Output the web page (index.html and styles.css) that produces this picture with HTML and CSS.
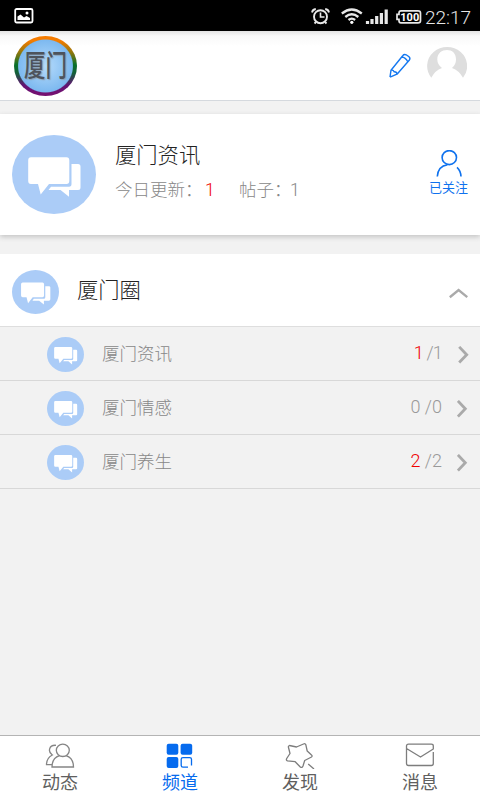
FILE: index.html
```
<!DOCTYPE html>
<html lang="zh-CN">
<head>
<meta charset="utf-8">
<title>厦门</title>
<link rel="stylesheet" href="styles.css">
</head>
<body>
<svg width="0" height="0" class="defs">
  <symbol id="chat" viewBox="0 0 84 79" preserveAspectRatio="none">
    <ellipse cx="42" cy="39.5" rx="42" ry="39.5" fill="#abccf7"/>
    <path fill="#fff" d="M19 22.3H54.5Q57.3 22.3 57.3 25.5V46Q57.3 49 54.5 49H37L28.7 59.5L26 49H19Q16.2 49 16.2 46V25.5Q16.2 22.3 19 22.3Z"/>
    <path fill="#fff" d="M59.5 29H66Q68.5 29 68.5 31.5V52.5Q68.5 55 66 55H57V61.8L48.5 55H36.5L39 51.8H57Q59.5 51.8 59.5 49Z"/>
  </symbol>
</svg>
<div class="status">
  <svg class="picture" width="20" height="16" viewBox="0 0 20 16"><rect x="1.2" y="1" width="17.3" height="13.5" rx="1.5" fill="none" stroke="#fff" stroke-width="1.8"/><path d="M3.5 12V8.5L6.5 6.5L10 9.5L12.5 8L16 10V12Z" fill="#fff"/><circle cx="13" cy="5" r="1.5" fill="#fff"/></svg>
  <svg class="signals" width="124" height="20" viewBox="309 6 124 20" fill="none" stroke="#e8e8e8">
    <circle cx="320.5" cy="16.7" r="6.5" stroke-width="1.9"/><path d="M320.5 12.5V17H324.5" stroke-width="1.6"/><path d="M312 12.5Q312.5 9.5 315.8 9M329 12.5Q328.5 9.5 325.2 9M316 22L314.5 23.5M325 22L326.5 23.5" stroke-width="1.8"/>
    <path d="M341.8 13.5Q351.8 5.5 361.8 13.5M345.3 17Q351.8 11.5 358.3 17M348.5 20Q351.8 17.2 355.1 20" stroke-width="2.3"/><circle cx="351.8" cy="22.3" r="1.6" fill="#fff" stroke="none"/>
    <path d="M367.5 21V24M372 19V24M376.7 16V24M381.4 13V24M386.2 9.5V24" stroke-width="3.2"/>
    <path d="M401 10.8H418Q420.5 10.8 420.5 13V20.7Q420.5 22.8 418 22.8H401Q399 22.8 399 20.7V19.3H397V14.3H399V13Q399 10.8 401 10.8Z" stroke-width="1.7"/>
    <text x="400.3" y="20.8" class="battery">100</text>
  </svg>
  <span class="clock">22:17</span>
</div>
<header class="top">
  <div class="logo"><span>厦门</span></div>
  <svg class="pencil" width="24" height="26" viewBox="0 0 24 26" fill="none" stroke="#1578f0" stroke-width="1.4" stroke-linejoin="round"><path d="M2 24.2L3 17.2L14.7 2.7Q16 1 18.2 1.8L21 3.8Q22.7 5.3 21.2 7.2L9 21.2L2 24.2M3 17.2Q5.5 16.7 6 18.7Q8.8 18.5 9 21.2M13.7 4Q17.5 4.2 19.8 8.7"/></svg>
  <svg class="avatar" width="40" height="35" viewBox="0 0 40 35"><path fill="#dedede" d="M4.3 31.7A20 19 0 1 1 36 31.7Q32 24.5 25 22Q29 18.5 29 13.5C29 7 25 4 20 4S10.3 7 10.3 13.5Q10.3 18.5 15 22Q8 24.5 4.3 31.7Z"/></svg>
</header>
<section class="board">
  <svg class="chat-lg"><use href="#chat"/></svg>
  <div class="info">
    <h1>厦门资讯</h1>
    <p><span class="update">今日更新：</span><b>1</b><span class="posts">帖子：</span><span>1</span></p>
  </div>
  <div class="follow">
    <svg width="28" height="28" viewBox="0 0 28 28" fill="none" stroke="#0f72ee" stroke-width="1.6"><ellipse cx="15.3" cy="7.6" rx="7.2" ry="7"/><path d="M3.3 26.5Q4 16 13.5 14.7M23 17.3Q26.7 20.5 27 26.5"/></svg>
    <span>已关注</span>
  </div>
</section>
<section class="group">
  <svg class="chat-md"><use href="#chat"/></svg>
  <h2>厦门圈</h2>
  <svg class="up" width="20" height="11" viewBox="0 0 20 11" fill="none" stroke="#aaa" stroke-width="2.4"><path d="M1.8 9.2L10.6 2L19.3 9.2"/></svg>
</section>
<ul class="rows">
  <li><svg class="chat-sm"><use href="#chat"/></svg><span class="name">厦门资讯</span><span class="count tight"><b>1</b> /1</span><svg class="next" width="12" height="18" viewBox="0 0 12 18"><path d="M2.2 .9L9.7 8.7L2.2 16.5"/></svg></li>
  <li><svg class="chat-sm"><use href="#chat"/></svg><span class="name">厦门情感</span><span class="count">0 /0</span><svg class="next" width="12" height="18" viewBox="0 0 12 18"><path d="M.9 .9L8.3 8.7L.9 16.5"/></svg></li>
  <li><svg class="chat-sm"><use href="#chat"/></svg><span class="name">厦门养生</span><span class="count"><b>2</b> /2</span><svg class="next" width="12" height="18" viewBox="0 0 12 18"><path d="M.9 .9L8.3 8.7L.9 16.5"/></svg></li>
</ul>
<nav class="tabs">
  <a><svg width="30" height="26" viewBox="0 0 30 26" fill="none" stroke="#858585" stroke-width="1.3"><ellipse cx="17.8" cy="7.3" rx="6.5" ry="6.2"/><path d="M14.5 12.6Q7 15 7 24H28.5Q28.5 15 21 12.6M11 2.3C3.5 1.8 2.8 9 7.3 12Q1.5 15 1.5 21.7H7"/></svg><span>动态</span></a>
  <a class="active"><svg width="30" height="26" viewBox="0 0 30 26" fill="#066bee"><rect x="1.7" y=".7" width="11.6" height="11" rx="2"/><rect x="15.6" y=".7" width="11.6" height="11" rx="2"/><rect x="1.7" y="14" width="11.6" height="11" rx="2"/><path fill="none" stroke="#066bee" stroke-width="1.3" d="M23 24.2H18Q16.2 24.2 16.2 22.5V16.3Q16.2 14.6 18 14.6H24.7Q26.5 14.6 26.5 16.3V22.5"/></svg><span>频道</span></a>
  <a><svg width="30" height="26" viewBox="0 0 30 26" fill="none" stroke="#7d7d7d" stroke-width="1.3" stroke-linejoin="round"><path d="M4.5 2.5Q3 3 3.5 4.5L5 10.5L1.7 15.5Q.8 17.3 2.5 17.8L10.2 18.7L15.3 24Q17 25.3 18 23L19.7 17.5L26.5 14Q27.7 13 26.5 12L22.2 8L20.8 1.7Q20.3 .2 18.5 1L11.5 4ZM23.2 21L29 26"/></svg><span>发现</span></a>
  <a><svg width="30" height="26" viewBox="0 0 30 26" fill="none" stroke="#7d7d7d" stroke-width="1.3" stroke-linejoin="round"><path d="M28.3 9V20.5Q28.3 22.5 26.3 22.5H3.5Q1.5 22.5 1.5 20.5V3Q1.5 1.2 3.5 1.2H26.3Q28.3 1.2 28.3 3V6L15.5 14L1.5 5.5"/></svg><span>消息</span></a>
</nav>
</body>
</html>
```
FILE: styles.css
```
* { box-sizing: border-box; }
body {
  margin: 0;
  width: 480px;
  height: 800px;
  display: flex;
  flex-direction: column;
  overflow: hidden;
  background: #f2f2f2;
  font-family: Roboto, "Noto Sans CJK SC", sans-serif;
  font-weight: 300;
  color: #222;
}
svg { display: block; flex: none; }
.defs { position: absolute; }
h1, h2, p, ul { margin: 0; padding: 0; font-weight: 300; }
b { font-weight: 300; color: #f00000; }

.status {
  height: 31px;
  flex: none;
  background: #000;
  display: flex;
  align-items: center;
  padding-left: 14px;
}
.signals { margin-left: 275px; }
.battery { font: 700 11px Roboto, sans-serif; fill: #fff; stroke: none; }
.clock { color: #e6e6e6; font-size: 19px; line-height: 31px; margin: 3px 0 0 -8px; white-space: nowrap; }

.top {
  height: 70px;
  flex: none;
  display: flex;
  align-items: center;
  padding: 0 13px 0 14px;
  border-bottom: 1px solid #d5d9de;
  background: linear-gradient(#e3e3e3, #f8f8f8 5px, #fff 15px);
}
.logo {
  width: 63px;
  height: 60px;
  border-radius: 50%;
  display: flex;
  align-items: center;
  justify-content: center;
  background:
    radial-gradient(ellipse 28px 27px, #b5dbfb 0, #7db9f0 96%, transparent 100%),
    linear-gradient(#f57c00 8%, #a0780a 25%, #08702a 48%, #14603a 62%, #621373 82%, #781070);
}
.logo span {
  color: #4d535c;
  font-size: 21.5px;
  font-weight: 500;
  line-height: 28px;
  text-shadow: 1px 1px 1px #8b9daf;
  white-space: nowrap;
  transform: scaleY(1.4);
}
.pencil { margin-left: auto; }
.avatar { margin: -5px 0 0 15px; }

.board {
  height: 121px;
  margin-top: 13px;
  flex: none;
  background: #fff;
  display: flex;
  padding: 21px 11px 0 12px;
  box-shadow: 0 2px 5px #c4c4c4;
}
.chat-lg { width: 84px; height: 79px; }
.info { margin-left: 19px; }
h1 { font-size: 21.3px; line-height: 30px; margin-top: 6px; }
.info p { display: flex; font-size: 17.5px; line-height: 26px; margin-top: 6px; color: #888; white-space: nowrap; }
.update { width: 90px; }
.info b { width: 34px; }
.posts { width: 51px; }
.follow { margin: 15px 1px 0 auto; display: flex; flex-direction: column; align-items: center; color: #0f72ee; font-size: 13px; line-height: 20px; font-weight: 400; }

.group {
  height: 72px;
  margin-top: 19px;
  flex: none;
  background: #fff;
  display: flex;
  align-items: center;
  padding: 4px 12px 0;
}
.chat-md { width: 47px; height: 44px; }
h2 { margin: -3px 0 0 18px; font-size: 21.3px; line-height: 32px; }
.up { margin: 3px 0 0 auto; }

.rows { list-style: none; border-top: 1px solid #dedede; flex: none; }
.rows li {
  height: 54px;
  border-bottom: 1px solid #d8d8d8;
  display: flex;
  align-items: center;
  padding: 2px 11px 0 47px;
  font-size: 17.5px;
  color: #888;
}
.chat-sm { width: 37px; height: 35px; }
.name { margin: -4px 0 0 18px; }
.count { margin: -4px 15px 0 auto; font-size: 18px; color: #999; }
.tight { letter-spacing: -.8px; }
.next { fill: none; stroke: #aaa; stroke-width: 2.8; }

.tabs {
  margin-top: auto;
  height: 65px;
  flex: none;
  border-top: 1px solid #b4b4b4;
  background: #fff;
  display: flex;
}
.tabs a { flex: 1; display: flex; flex-direction: column; align-items: center; padding-top: 7px; font-size: 18px; line-height: 26px; font-weight: 400; color: #606060; }
.tabs span { margin-top: 1px; }
.tabs .active { color: #066bee; }
```
